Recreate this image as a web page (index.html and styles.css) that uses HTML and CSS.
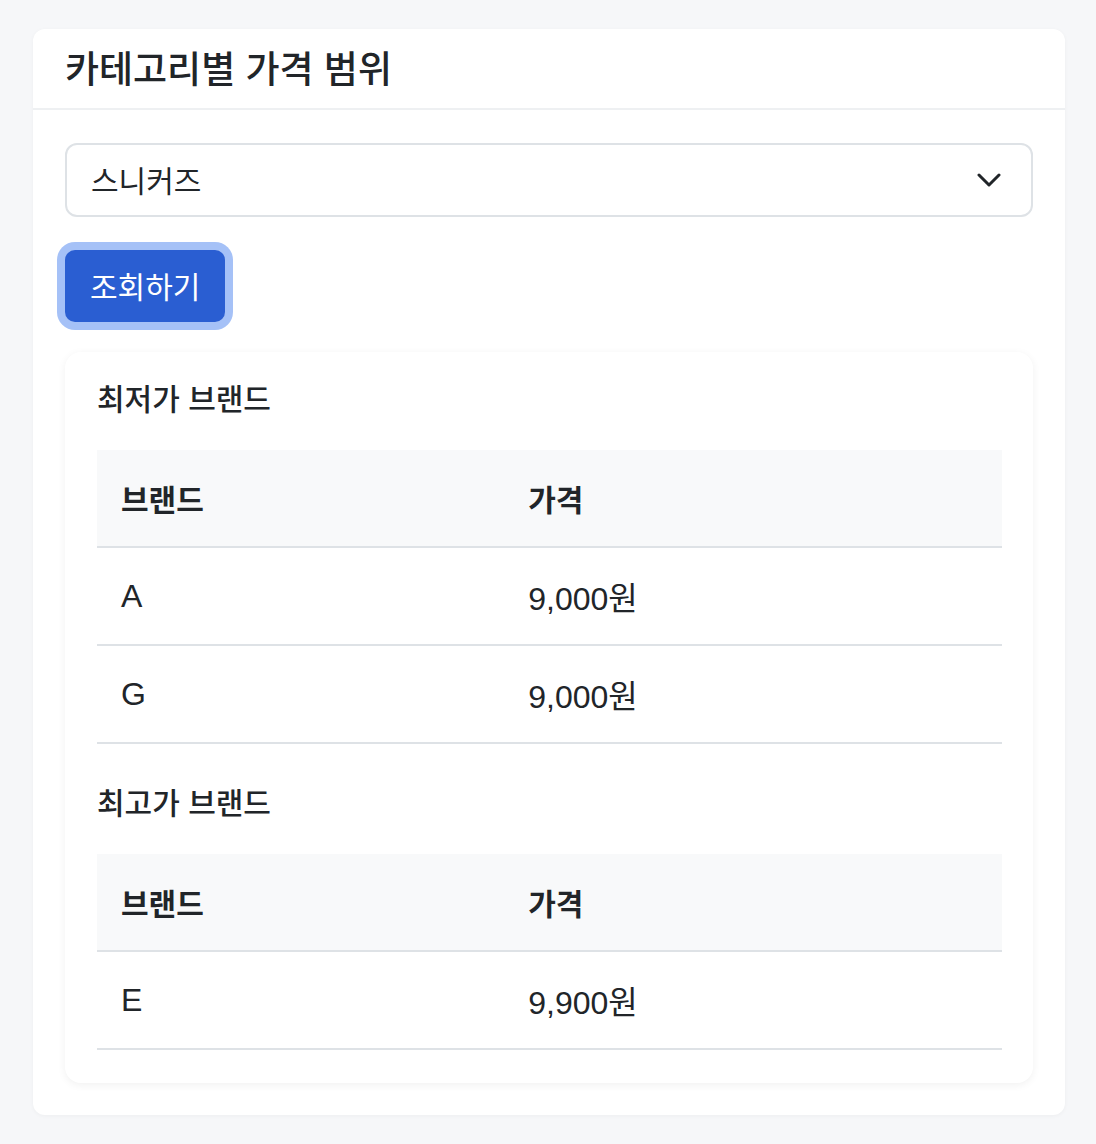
FILE: index.html
```html
<!DOCTYPE html>
<html lang="ko">
<head>
<meta charset="utf-8">
<title>카테고리별 가격 범위</title>
<link rel="stylesheet" href="styles.css">
</head>
<body>
<div class="page">
  <section class="card">
    <header class="card-header">
      <h1 class="card-title">카테고리별 가격 범위</h1>
    </header>
    <div class="card-body">
      <div class="select">
        <span class="select-value">스니커즈</span>
        <svg class="chevron" width="24" height="16" viewBox="0 0 24 16" aria-hidden="true">
          <polyline points="2,3 12,13 22,3" fill="none" stroke="#212529" stroke-width="3" stroke-linecap="round" stroke-linejoin="round"/>
        </svg>
      </div>
      <div class="actions">
        <button class="btn" type="button">조회하기</button>
      </div>
      <div class="result-card">
        <h2 class="section-title">최저가 브랜드</h2>
        <table class="table">
          <thead>
            <tr><th class="col-brand">브랜드</th><th>가격</th></tr>
          </thead>
          <tbody>
            <tr><td>A</td><td>9,000원</td></tr>
            <tr><td>G</td><td>9,000원</td></tr>
          </tbody>
        </table>
        <h2 class="section-title">최고가 브랜드</h2>
        <table class="table">
          <thead>
            <tr><th class="col-brand">브랜드</th><th>가격</th></tr>
          </thead>
          <tbody>
            <tr><td>E</td><td>9,900원</td></tr>
          </tbody>
        </table>
      </div>
    </div>
  </section>
</div>
</body>
</html>
```

FILE: styles.css
```css
* { box-sizing: border-box; }
html, body {
  margin: 0;
  padding: 0;
  background: #f6f7f9;
}
body {
  font-family: "Liberation Sans", "Noto Sans CJK KR", sans-serif;
  color: #212529;
}
.page {
  padding: 29px 31px 30px 33px;
}
.card {
  background: #ffffff;
  border-radius: 12px;
  box-shadow: 0 1px 4px rgba(0, 0, 0, 0.04);
}
.card-header {
  height: 81px;
  display: flex;
  align-items: center;
  padding: 0 32px;
  border-bottom: 2px solid #eef0f2;
}
.card-title {
  margin: 0;
  font-size: 37px;
  font-weight: 500;
  line-height: 44px;
  position: relative;
  top: 2px;
}
.card-body {
  padding: 33px 32px 32px;
}
.select {
  height: 74px;
  border: 2px solid #dee2e6;
  border-radius: 12px;
  display: flex;
  align-items: center;
  justify-content: space-between;
  padding: 0 30px 0 24px;
}
.select-value {
  font-size: 30px;
  line-height: 1;
  position: relative;
  top: 2px;
}
.chevron { display: block; }
.actions {
  padding: 33px 0 30px;
  display: flex;
}
.btn {
  height: 72px;
  padding: 4px 25px 0;
  border: none;
  border-radius: 10px;
  background: #2a5ed2;
  color: #ffffff;
  font-family: "Liberation Sans", "Noto Sans CJK KR", sans-serif;
  font-size: 30px;
  line-height: 1;
  box-shadow: 0 0 0 8px #a5c1f7;
}
.result-card {
  background: #ffffff;
  border-radius: 16px;
  box-shadow: 0 2px 8px rgba(0, 0, 0, 0.06);
  padding: 30px 31px 33px 32px;
}
.section-title {
  margin: 0 0 32px;
  font-size: 30px;
  font-weight: 500;
  line-height: 36px;
}
.table {
  width: 100%;
  border-collapse: collapse;
  margin-bottom: 42px;
}
.table:last-child { margin-bottom: 0; }
.table th,
.table td {
  text-align: left;
  padding: 0 24px;
  border-bottom: 2px solid #dee2e6;
}
.table th {
  height: 97px;
  background: #f8f9fa;
  font-size: 30px;
  font-weight: 700;
}
.table td {
  height: 98px;
  font-size: 32px;
  font-weight: 400;
}
.col-brand { width: 45%; }
```
